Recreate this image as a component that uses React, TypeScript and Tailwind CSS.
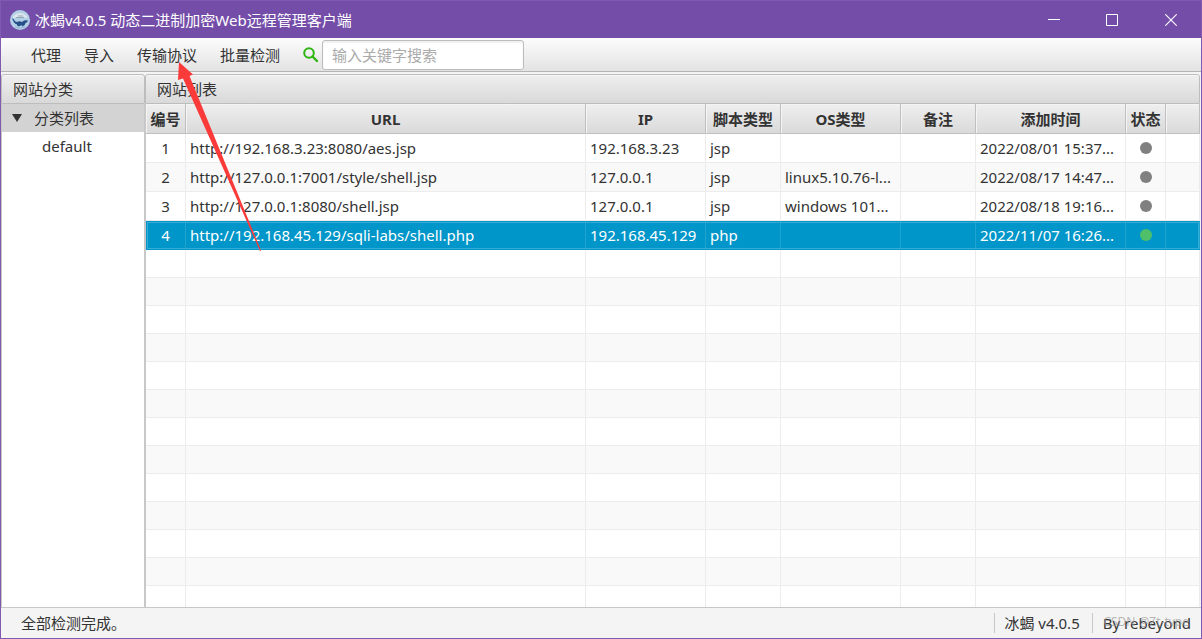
import clsx from "clsx";

interface Site {
	id: number;
	url: string;
	ip: string;
	script: string;
	os: string;
	note: string;
	addedAt: string;
	online: boolean;
}

const MENU = ["代理", "导入", "传输协议", "批量检测"];

const COLUMNS = [
	{ title: "编号", width: "w-[40px]" },
	{ title: "URL", width: "w-[400px]" },
	{ title: "IP", width: "w-[120px]" },
	{ title: "脚本类型", width: "w-[75px]" },
	{ title: "OS类型", width: "w-[120px]" },
	{ title: "备注", width: "w-[75px]" },
	{ title: "添加时间", width: "w-[150px]" },
	{ title: "状态", width: "w-[40px]" },
	{ title: "", width: "" },
];

const SITES: Site[] = [
	{
		id: 1,
		url: "http://192.168.3.23:8080/aes.jsp",
		ip: "192.168.3.23",
		script: "jsp",
		os: "",
		note: "",
		addedAt: "2022/08/01 15:37...",
		online: false,
	},
	{
		id: 2,
		url: "http://127.0.0.1:7001/style/shell.jsp",
		ip: "127.0.0.1",
		script: "jsp",
		os: "linux5.10.76-l...",
		note: "",
		addedAt: "2022/08/17 14:47...",
		online: false,
	},
	{
		id: 3,
		url: "http://127.0.0.1:8080/shell.jsp",
		ip: "127.0.0.1",
		script: "jsp",
		os: "windows 101...",
		note: "",
		addedAt: "2022/08/18 19:16...",
		online: false,
	},
	{
		id: 4,
		url: "http://192.168.45.129/sqli-labs/shell.php",
		ip: "192.168.45.129",
		script: "php",
		os: "",
		note: "",
		addedAt: "2022/11/07 16:26...",
		online: true,
	},
];

const SELECTED_ID = 4;
const EMPTY_ROWS = 30;

function AppLogo() {
	return (
		<svg viewBox="0 0 20 20" className="h-5 w-5 shrink-0" aria-hidden="true">
			<circle cx="10" cy="10" r="10" fill="#b4d0e6" />
			<path d="M3 6Q10 0 17 6L17 8Q10 6 3 8Z" fill="#dbe5ec" />
			<path d="M6 7.500h8M8 6h5" stroke="#8799ab" strokeWidth="0.8" />
			<path
				d="M2 8L4 9.500Q4.500 11.500 7 12Q9 10.500 12 12L14 10.500Q16 10 18 10.500Q17.500 12.500 15.500 13Q15 16 12.500 16.500L11.500 15Q9.500 17 7.500 16L7 14.500Q3.500 13.500 2 8Z"
				fill="#27508a"
			/>
			<path d="M5 17Q10 19.500 15 17" stroke="#8fb4d0" fill="none" />
		</svg>
	);
}

function TitleBar() {
	return (
		<header className="flex h-[37px] shrink-0 items-center bg-[#744da9] pl-[9px] text-white">
			<AppLogo />
			<h1 className="ml-[5px] flex-1 truncate">冰蝎v4.0.5 动态二进制加密Web远程管理客户端</h1>
			<button type="button" aria-label="最小化" className="flex h-full w-[58px] items-center justify-center">
				<svg viewBox="0 0 12 12" className="h-3 w-3" stroke="currentColor">
					<path d="M0 5.500h12" />
				</svg>
			</button>
			<button type="button" aria-label="最大化" className="flex h-full w-[58px] items-center justify-center">
				<svg viewBox="0 0 12 12" className="h-3 w-3" fill="none" stroke="currentColor">
					<path d="M0.500 0.500h11v11h-11z" />
				</svg>
			</button>
			<button type="button" aria-label="关闭" className="flex h-full w-[60px] items-center justify-center">
				<svg viewBox="0 0 12 12" className="h-3 w-3" stroke="currentColor" strokeWidth="1.1">
					<path d="M0.300 0.300l11.400 11.400M11.700 0.300L0.300 11.700" />
				</svg>
			</button>
		</header>
	);
}

function Toolbar() {
	return (
		<div className="flex h-[34px] shrink-0 items-center border-b border-[#b5b5b5] bg-linear-to-b from-[#fcfcfc] to-[#e3e3e3] pl-[18px]">
			<nav className="flex">
				{MENU.map((item, i) => (
					<button key={item} type="button" className={clsx("pl-3 whitespace-nowrap", i < MENU.length - 1 && "pr-[11px]")}>
						{item}
					</button>
				))}
			</nav>
			<label htmlFor="search" aria-label="搜索" className="ml-[23px]">
				<svg viewBox="0 0 15 15" className="h-[15px] w-[15px]" fill="none" stroke="#2fb511">
					<circle cx="6" cy="6" r="4.800" strokeWidth="2" />
					<path d="M9.500 9.500L14 14" strokeWidth="2.400" strokeLinecap="round" />
				</svg>
			</label>
			<input
				id="search"
				type="text"
				placeholder="输入关键字搜索"
				className="ml-1 h-[30px] w-[202px] rounded-[3px] border border-[#bcbcbc] bg-white px-[9px] shadow-[inset_0_2px_2px_#f0f0f0] outline-none placeholder:text-[#aaaaaa]"
			/>
		</div>
	);
}

function PaneTitle({ children }: { children: string }) {
	return (
		<h2 className="h-[30px] shrink-0 rounded-t-[3px] border border-[#bdbdbd] bg-linear-to-b from-[#efefef] to-[#d9d9d9] px-[11px] leading-[28px] shadow-[inset_0_1px_0_#f8f8f8]">
			{children}
		</h2>
	);
}

function Sidebar() {
	return (
		<aside className="flex w-[144px] shrink-0 flex-col">
			<PaneTitle>网站分类</PaneTitle>
			<ul className="flex-1 border-x border-[#c8c8c8] bg-white">
				<li>
					<button type="button" aria-expanded="true" className="flex h-7 w-full items-center bg-[#d3d3d3] pl-[10px]">
						<svg viewBox="0 0 10 8" className="h-2 w-[10px]" fill="#333333">
							<path d="M0 0h10L5 8z" />
						</svg>
						<span className="ml-3">分类列表</span>
					</button>
					<ul>
						<li>
							<button type="button" className="flex h-7 w-full items-center pl-10">
								default
							</button>
						</li>
					</ul>
				</li>
			</ul>
		</aside>
	);
}

function SiteRow({ site, odd }: { site: Site; odd: boolean }) {
	const selected = site.id === SELECTED_ID;
	const cell = clsx(
		"h-[29px] truncate border-r border-b px-1 leading-7",
		selected ? "border-r-[#21a3d0] border-b-[#0096c9]" : "border-[#ececec]",
	);

	return (
		<tr
			aria-selected={selected}
			className={clsx(
				selected && "bg-[#0096c9] text-white outline outline-1 -outline-offset-2 outline-[#36acd5]",
				!selected && (odd ? "bg-[#f9f9f9]" : "bg-white"),
			)}
		>
			<td className={clsx(cell, "text-center")}>{site.id}</td>
			<td className={cell}>{site.url}</td>
			<td className={cell}>{site.ip}</td>
			<td className={cell}>{site.script}</td>
			<td className={cell}>{site.os}</td>
			<td className={cell}>{site.note}</td>
			<td className={cell}>{site.addedAt}</td>
			<td className={cell}>
				<span
					className={clsx("mx-auto block h-3 w-3 rounded-full", site.online ? "bg-[#4fbf69]" : "bg-[#808080]")}
				/>
			</td>
			<td className={cell} />
		</tr>
	);
}

function SiteTable() {
	return (
		<div className="min-h-0 flex-1 overflow-hidden border-l border-[#c8c8c8] bg-white">
			<table className="w-full min-w-[1040px] table-fixed border-separate border-spacing-0">
				<thead>
					<tr className="bg-linear-to-b from-[#efefef] to-[#d9d9d9]">
						{COLUMNS.map((column) => (
							<th
								key={column.title}
								className={clsx(
									"h-[30px] border-r border-b border-[#c0c0c0] font-bold whitespace-nowrap shadow-[inset_1px_1px_0_#f4f4f4]",
									column.width,
								)}
							>
								{column.title}
							</th>
						))}
					</tr>
				</thead>
				<tbody>
					{SITES.map((site, i) => (
						<SiteRow key={site.id} site={site} odd={i % 2 === 1} />
					))}
					{Array.from({ length: EMPTY_ROWS }, (_, i) => (
						<tr key={i} aria-hidden="true" className={i % 2 === 1 ? "bg-[#f9f9f9]" : "bg-white"}>
							{COLUMNS.map((column) => (
								<td key={column.title} className="h-7 border-r border-b border-[#ececec]" />
							))}
						</tr>
					))}
				</tbody>
			</table>
		</div>
	);
}

function StatusBar() {
	return (
		<footer className="relative flex h-[31px] shrink-0 items-center border-t border-[#c8c8c8] bg-[#f4f4f4] pl-5">
			<span className="flex-1">全部检测完成。</span>
			<span className="border-l border-[#c8c8c8] px-[9px] leading-5">冰蝎 v4.0.5</span>
			<span className="ml-[3px] border-l border-[#c8c8c8] px-[10px] leading-5">By rebeyond</span>
			<span className="absolute right-3 bottom-2 text-xs leading-4 text-[#999999]/70">CSDN @Zt-type</span>
		</footer>
	);
}

// Red annotation arrow pointing at the 传输协议 menu
function PointerArrow() {
	return (
		<svg
			viewBox="0 0 84 190"
			className="pointer-events-none absolute top-[60px] left-[176px] h-[190px] w-[84px]"
			fill="#fb3a3a"
			aria-hidden="true"
		>
			<path d="M2 1L16 13.500L12.500 15L84 189.500L83 190L6 17.500L1 19Z" />
		</svg>
	);
}

export default function App() {
	return (
		<div className="relative flex h-screen flex-col overflow-hidden border border-[#7f5ab0] bg-[#f4f4f4] font-['Noto_Sans','Noto_Sans_CJK_SC',sans-serif] text-[15px] leading-5 text-[#333333]">
			<TitleBar />
			<Toolbar />
			<main className="flex min-h-0 flex-1 pt-[2px] pr-px">
				<Sidebar />
				<section className="flex min-w-0 flex-1 flex-col">
					<PaneTitle>网站列表</PaneTitle>
					<SiteTable />
				</section>
			</main>
			<StatusBar />
			<PointerArrow />
		</div>
	);
}
